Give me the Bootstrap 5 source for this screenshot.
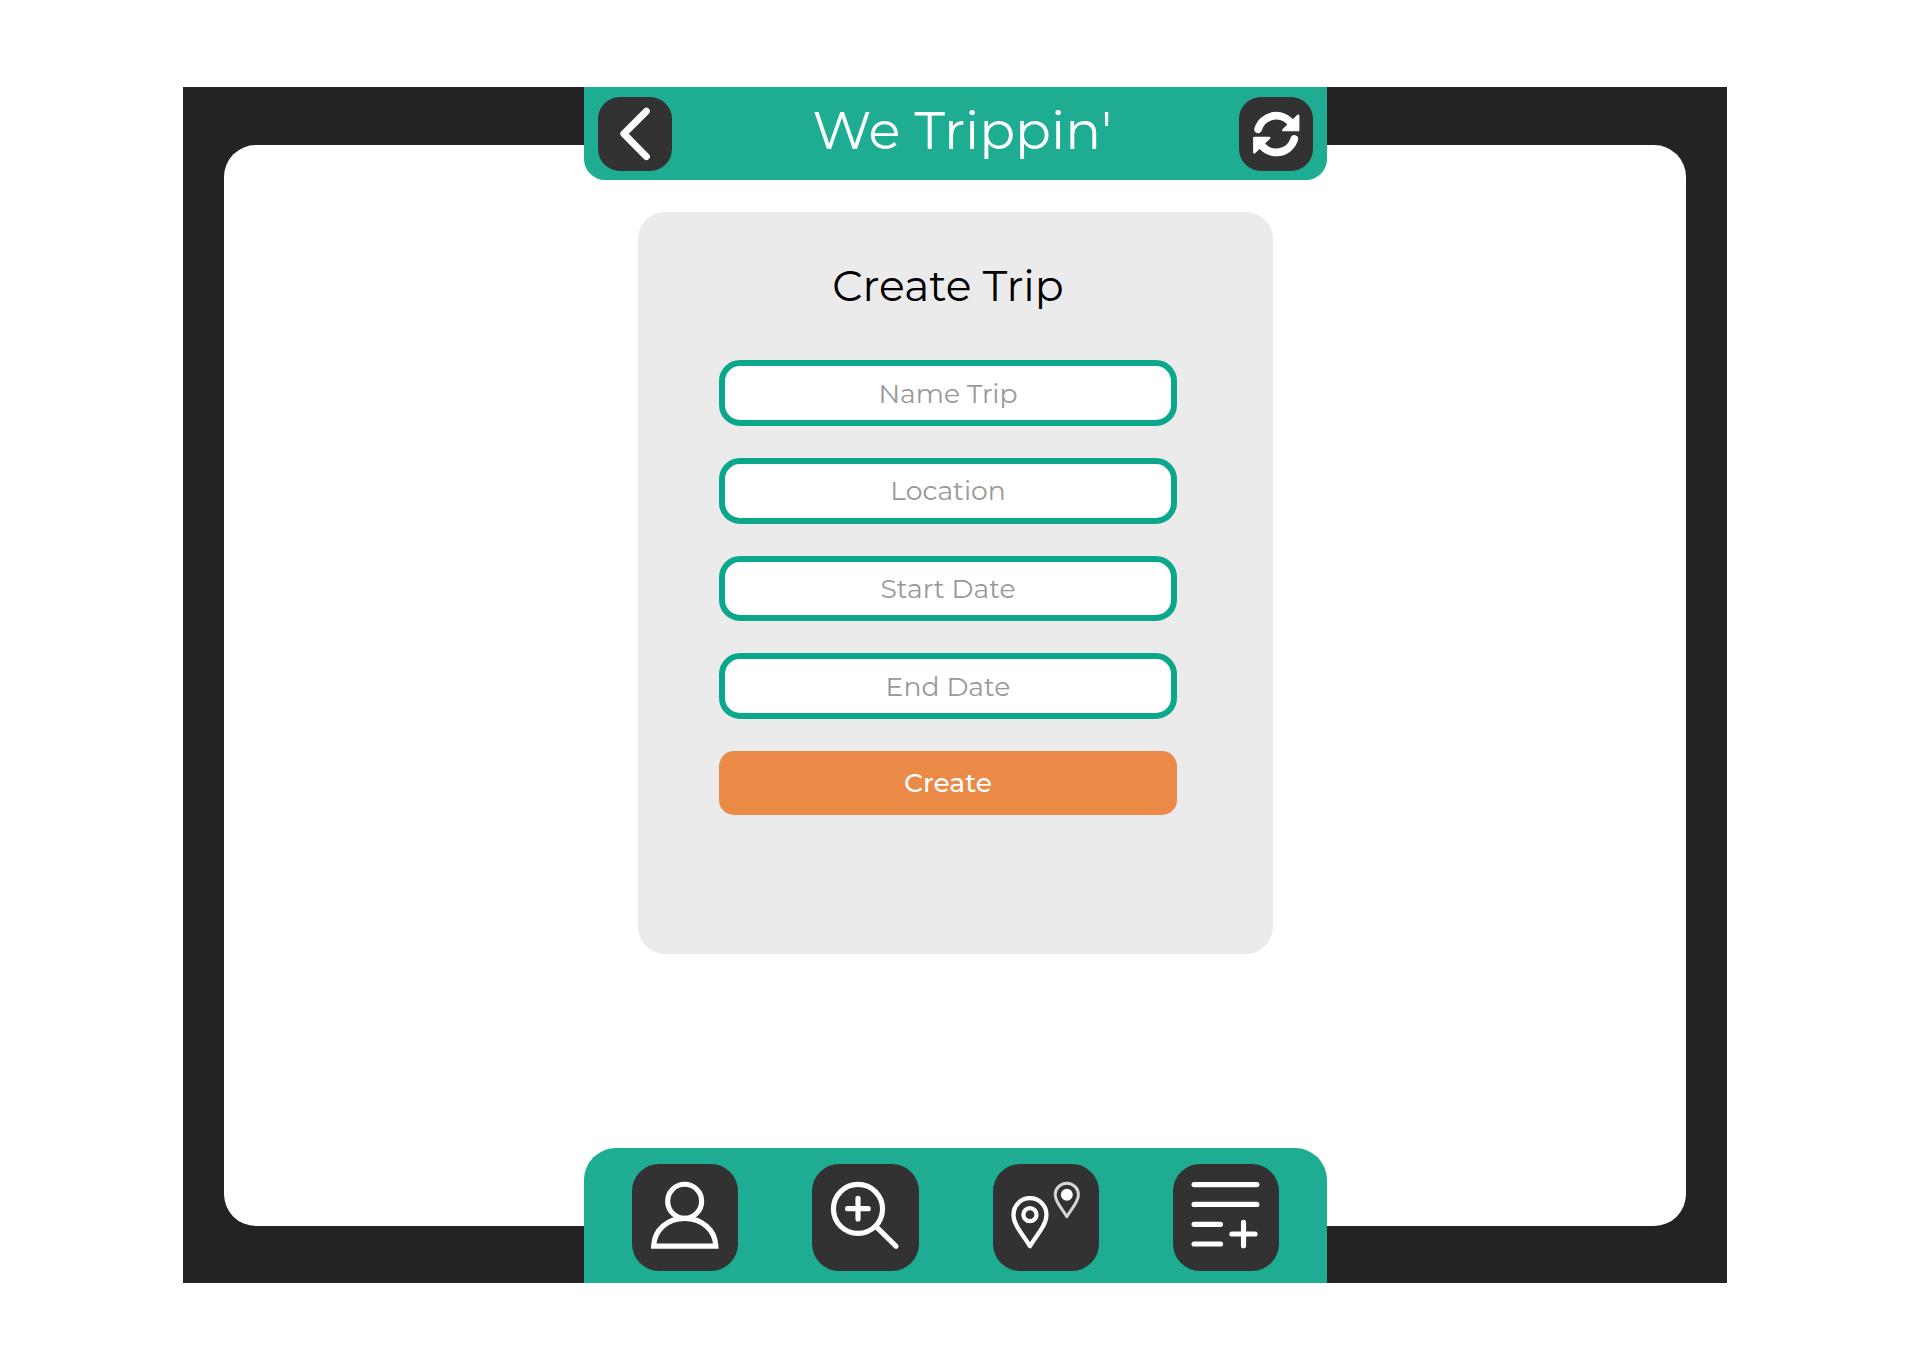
<!DOCTYPE html>
<html lang="en">
<head>
<meta charset="utf-8">
<meta name="viewport" content="width=device-width, initial-scale=1">
<title>We Trippin'</title>
<link href="https://cdn.jsdelivr.net/npm/bootstrap@5.3.0/dist/css/bootstrap.min.css" rel="stylesheet">
<style>
  body { font-family: Montserrat, "Open Sans", sans-serif; background: #fff; padding: 87px 193px 0 183px; }
  .app-frame { height: 1196px; background: #232323; padding: 58px 41px 57px 41px; }
  .app-panel { background: #fff; border-radius: 32px; padding-top: 67.3px; padding-left: 413.5px; }
  .app-bar, .app-dock { left: 401.3px; width: 742.5px; background: #1ead93; }
  .app-bar { height: 93.3px; border-radius: 0 0 21px 21px; padding: 0 14px 0 13.3px; }
  .app-dock { height: 134.6px; border-radius: 32px 32px 0 0; padding: 16px 0 0 47.8px; gap: 74px; }
  .app-title { font-size: 53px; line-height: 80px; padding: 0 0 7px 14px; }
  .tile { background: #323232; color: #fff; border: 0; padding: 0; }
  .tile svg { display: block; width: 100%; height: 100%; fill: none; stroke: currentColor; stroke-linecap: round; stroke-linejoin: round; }
  .tile-sm { width: 74px; height: 74px; border-radius: 22px; }
  .tile-lg { width: 106.3px; height: 106.3px; border-radius: 27px; }
  .trip-form { width: 635.5px; height: 742px; background: #ebebeb; border-radius: 27px; padding: 48.9px 96px 0 81.5px; gap: 32px; }
  .trip-form h2 { font-size: 42.6px; line-height: 50px; font-weight: 400; color: #000; margin: 0 0 17.3px; }
  .trip-input { height: 65.6px; border: 6px solid #0aa78c; border-radius: 21px; background: #fff; font-size: 26.6px; padding: 0; }
  .trip-input::placeholder { color: #999; opacity: 1; }
  .trip-submit { height: 64px; border: 0; border-radius: 15px; font-size: 26.6px; font-weight: 500; line-height: 1; padding: 0; }
  .trip-submit, .trip-submit:hover { background: #eb8947; color: #fff; }
</style>
</head>
<body>
<div class="app-frame position-relative">
  <main class="app-panel h-100">
    <form class="trip-form d-flex flex-column">
      <h2 class="text-center">Create Trip</h2>
      <input class="trip-input form-control text-center" type="text" placeholder="Name Trip">
      <input class="trip-input form-control text-center" type="text" placeholder="Location">
      <input class="trip-input form-control text-center" type="text" placeholder="Start Date">
      <input class="trip-input form-control text-center" type="text" placeholder="End Date">
      <button class="trip-submit btn w-100" type="button">Create</button>
    </form>
  </main>

  <header class="app-bar position-absolute top-0 d-flex align-items-center justify-content-between">
    <button class="tile tile-sm" type="button" aria-label="Back">
      <svg viewBox="0 0 74.5 74.5" stroke-width="7"><path d="M48.7 14.3 26 37 48.7 60"/></svg>
    </button>
    <div class="app-title text-white">We Trippin'</div>
    <button class="tile tile-sm" type="button" aria-label="Refresh">
      <svg viewBox="0 0 74.5 74.5">
        <g id="turn"><path stroke-width="7.8" d="M19.3 32.4A18.9 18.9 0 0 1 53 27"/><path fill="#fff" stroke-width="2.4" d="M59.6 18.8V33.4H44.6Z"/></g>
        <use href="#turn" transform="rotate(180 37.5 37.3)"/>
      </svg>
    </button>
  </header>

  <nav class="app-dock position-absolute bottom-0 d-flex">
    <button class="tile tile-lg" type="button" aria-label="Profile">
      <svg viewBox="0 0 107 107" stroke-width="5.2" style="stroke-linejoin:miter"><circle cx="53" cy="37.5" r="17.1"/><path d="M21.8 82.6C22.6 66 36 54.8 53 54.8S83.6 66 84.4 82.6Z"/></svg>
    </button>
    <button class="tile tile-lg" type="button" aria-label="Search">
      <svg viewBox="0 0 107 107" stroke-width="5.2"><circle cx="46.3" cy="45.2" r="24.7"/><path d="M35.8 45H56.6M46.3 34.6V55.4M64.5 63 84.6 82.8"/></svg>
    </button>
    <button class="tile tile-lg" type="button" aria-label="Places">
      <svg viewBox="0 0 107 107" stroke-width="4.3"><path d="M37.2 82.8C31 72 20.6 62 20.6 51A16.6 16.6 0 0 1 53.8 51C53.8 62 43.4 72 37.2 82.8Z"/><circle cx="37.2" cy="51" r="6.6"/><path stroke="#d6d6d6" stroke-width="3" d="M74.3 53C70 45.5 62.6 38.5 62.6 31A11.7 11.7 0 0 1 86 31C86 38.5 78.6 45.5 74.3 53Z"/><circle cx="74.3" cy="31" r="6" fill="#fff" stroke="none"/></svg>
    </button>
    <button class="tile tile-lg" type="button" aria-label="Add to list">
      <svg viewBox="0 0 107 107" stroke-width="5.2"><path d="M21.2 20.7H84.4M21.2 40.7H84.4M21.2 60.7H47.8M21.2 80.5H47.8M59.3 70.5H82.6M71 58.8V82.2"/></svg>
    </button>
  </nav>
</div>
<script src="https://cdn.jsdelivr.net/npm/bootstrap@5.3.0/dist/js/bootstrap.bundle.min.js"></script>
</body>
</html>
